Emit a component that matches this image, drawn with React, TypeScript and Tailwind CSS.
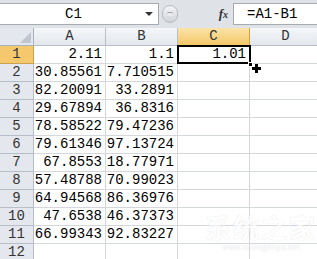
import React from "react";

const colA = ["2.11","30.85561","82.20091","29.67894","78.58522","79.61346","67.8553","57.48788","64.94568","47.6538","66.99343",""];
const colB = ["1.1","7.710515","33.2891","36.8316","79.47236","97.13724","18.77971","70.99023","86.36976","46.37373","92.83227",""];

const mono = { fontFamily: '"Liberation Mono", "DejaVu Sans Mono", monospace' };

export default function App() {
  const rows = Array.from({ length: 12 }, (_, i) => i);
  return (
    <div className="w-[317px] h-[259px] overflow-hidden bg-white relative" style={mono}>
      {/* formula bar */}
      <div className="h-[28px] bg-[#dfe3e8] flex items-start pt-[3px]">
        <div className="h-[22px] w-[159px] bg-white border-y border-r border-[#a7abb0] flex items-center pl-[2px] pr-[5px]">
          <span className="flex-1 text-center text-[14px] text-black leading-[18px]">C1</span>
          <span className="w-0 h-0 border-l-[4px] border-r-[4px] border-t-[4px] border-l-transparent border-r-transparent border-t-[#333]"></span>
        </div>
        <div className="w-[74px] h-[22px] flex items-center pl-[3px] pr-[3px]">
          <div className="w-[16px] h-[18px] rounded-full bg-gradient-to-b from-[#f4f5f7] to-[#cfd3d8] border border-[#b8bcc2] flex items-center justify-center">
            <div className="w-[6px] h-[4px] rounded-full bg-[#e8eaec] border-t border-[#9aa0a6]"></div>
          </div>
          <span className="ml-auto mr-[2px] text-[13px] italic font-bold text-[#333]" style={{ fontFamily: '"Liberation Serif", serif' }}>f<span className="text-[10px]">x</span></span>
        </div>
        <div className="flex-1 h-[22px] bg-white border-y border-l border-[#a7abb0] flex items-center pl-[13px]">
          <span className="text-[14px] text-black leading-[18px]">=A1-B1</span>
        </div>
      </div>
      {/* grid */}
      <div className="grid grid-cols-[34px_72px_72px_72px_72px] auto-rows-[18px]">
        {/* header row */}
        <div className="bg-[#e4e8ee] border-r border-b border-[#a9b3bf] flex items-end justify-end p-[2px]">
          <span className="w-0 h-0 border-b-[11px] border-l-[11px] border-b-[#bfc6cf] border-l-transparent"></span>
        </div>
        {["A","B","C","D"].map((c) => (
          <div key={c} className={`border-r border-b flex items-center justify-center text-[14px] text-[#333] ${c === "C" ? "bg-gradient-to-b from-[#fbe3a8] to-[#f3c766] border-[#c9a24e]" : "bg-gradient-to-b from-[#f4f6f9] to-[#e3e7ec] border-[#b7bec7]"}`}>{c}</div>
        ))}
        {rows.map((r) => (
          <React.Fragment key={r}>
            <div className={`border-r border-b flex items-center justify-center text-[14px] text-[#333] ${r === 0 ? "bg-[#f5c86d] border-[#c9a24e]" : "bg-[#e4e8ee] border-[#b7bec7]"}`}>{r + 1}</div>
            <div className="border-r border-b border-[#d4d7db] flex items-center justify-end pr-[3px] text-[14px] text-black">{colA[r]}</div>
            <div className="border-r border-b border-[#d4d7db] flex items-center justify-end pr-[3px] text-[14px] text-black">{colB[r]}</div>
            <div className="border-r border-b border-[#d4d7db] flex items-center justify-end pr-[3px] text-[14px] text-black relative">
              {r === 0 ? (
                <>
                  <span>1.01</span>
                  <span className="absolute left-[-1px] top-[-1px] w-[74px] h-[19px] border-2 border-black"></span>
                  <span className="absolute right-[-4px] bottom-[-4px] w-[5px] h-[5px] bg-black border border-white z-10"></span>
                </>
              ) : null}
            </div>
            <div className="border-r border-b border-[#d4d7db]"></div>
          </React.Fragment>
        ))}
      </div>
      {/* crosshair cursor */}
      <div className="absolute left-[252px] top-[64px] w-[9px] h-[9px] z-20">
        <div className="absolute left-[3px] top-0 w-[3px] h-[9px] bg-black"></div>
        <div className="absolute left-0 top-[3px] w-[9px] h-[3px] bg-black"></div>
      </div>
      {/* watermark */}
      <div className="absolute left-[205px] top-[212px] flex flex-col items-center text-white opacity-70" style={{ fontFamily: '"Noto Sans CJK SC", sans-serif', textShadow: "0 0 1px #c8c8c8" }}>
        <span className="text-[26px] font-bold tracking-[2px] leading-[30px]">系统之家</span>
        <span className="text-[8px] leading-[10px]">www.xitongzhijia.net</span>
      </div>
    </div>
  );
}
